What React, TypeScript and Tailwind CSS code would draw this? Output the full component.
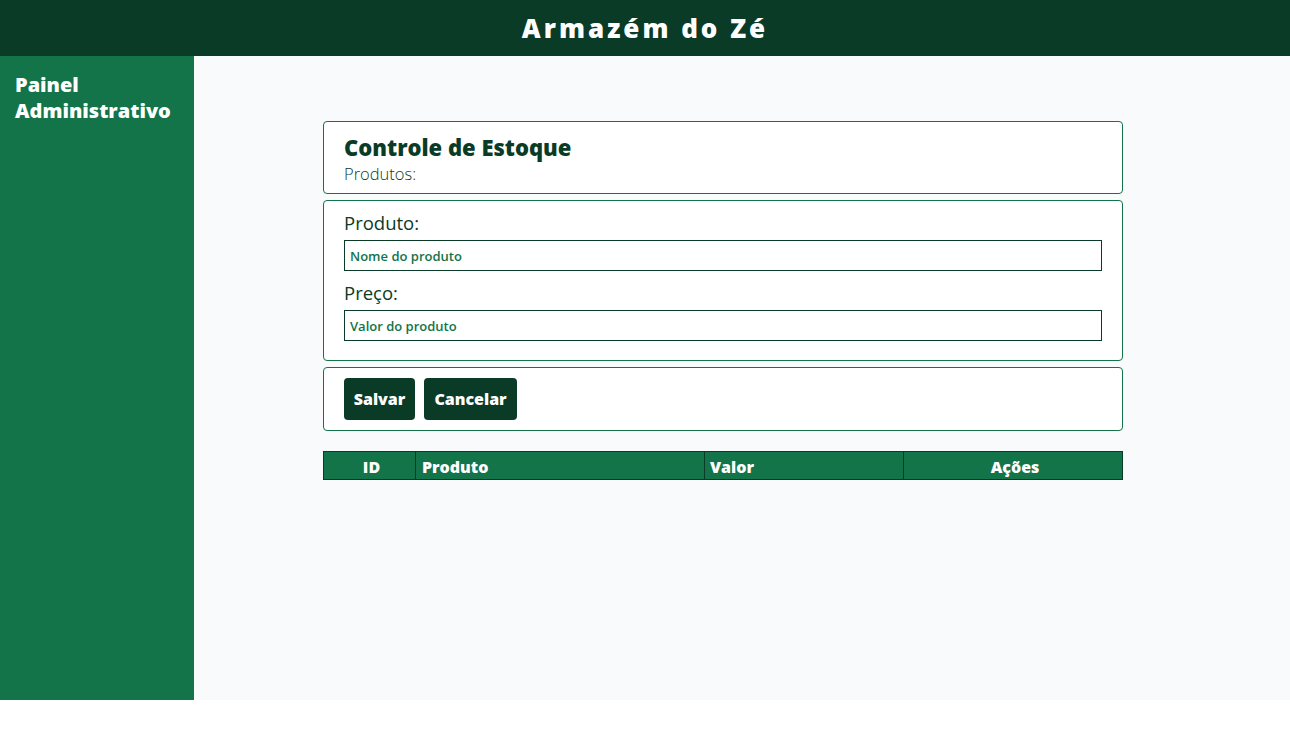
import React from 'react';

const App = () => {
  return (
    <div className="h-[700px] flex flex-col font-['Open_Sans',sans-serif]">
      <header className="h-14 bg-[#0a3b26] flex items-center justify-center">
        <h1 className="text-[26px] font-extrabold text-white tracking-[3px]">Armazém do Zé</h1>
      </header>

      <div className="flex flex-1">
        <aside className="w-[194px] bg-[#13744a] px-[15px] pt-[16px]">
          <h2 className="text-[20px] leading-[26px] font-extrabold text-white">
            Painel Administrativo
          </h2>
        </aside>

        <main className="flex-1 bg-[#f8fafc] pt-[65px] pl-[129px]">
          <div className="w-[800px] flex flex-col gap-[6px]">
            <div className="bg-white border border-[#13744a] rounded-[4px] px-5 pt-[10px] pb-[7px]">
              <h3 className="text-[22px] leading-[30px] font-extrabold text-[#0a3b26]">Controle de Estoque</h3>
              <p className="text-[16.5px] leading-[24px] font-light text-[#0a3b26]">Produtos:</p>
            </div>

            <div className="bg-white border border-[#13744a] rounded-[4px] px-5 pt-[11px] pb-[19px]">
              <label className="block text-[18.5px] leading-[22px] font-medium text-[#0a3b26] mb-[6px]">Produto:</label>
              <input
                placeholder="Nome do produto"
                className="w-full h-[31px] border border-[#0a3b26] px-[5px] text-[13px] font-semibold placeholder:text-[#13744a] outline-none"
              />
              <label className="block text-[18.5px] leading-[22px] font-medium text-[#0a3b26] mt-[11px] mb-[6px]">Preço:</label>
              <input
                placeholder="Valor do produto"
                className="w-full h-[31px] border border-[#0a3b26] px-[5px] text-[13px] font-semibold placeholder:text-[#13744a] outline-none"
              />
            </div>

            <div className="bg-white border border-[#13744a] rounded-[4px] px-5 py-[10px] flex gap-[9px]">
              <button className="h-[42px] w-[71px] bg-[#0a3b26] text-white text-[16px] font-extrabold rounded-[4px]">Salvar</button>
              <button className="h-[42px] w-[93px] bg-[#0a3b26] text-white text-[16px] font-extrabold rounded-[4px]">Cancelar</button>
            </div>
          </div>

          <table className="w-[800px] mt-5 border-collapse bg-[#13744a] text-white text-[16px]">
            <thead>
              <tr className="h-[28px]">
                <th className="w-[92px] border border-[#0a3b26] text-center font-extrabold pt-[3px] pl-[4px]">ID</th>
                <th className="w-[289px] border border-[#0a3b26] text-left font-extrabold px-[6px] pt-[3px]">Produto</th>
                <th className="w-[199px] border border-[#0a3b26] text-left font-extrabold px-[5px] pt-[3px]">Valor</th>
                <th className="border border-[#0a3b26] text-center font-extrabold pt-[3px] pl-[4px]">Ações</th>
              </tr>
            </thead>
          </table>
        </main>
      </div>
    </div>
  );
};

export default App;
